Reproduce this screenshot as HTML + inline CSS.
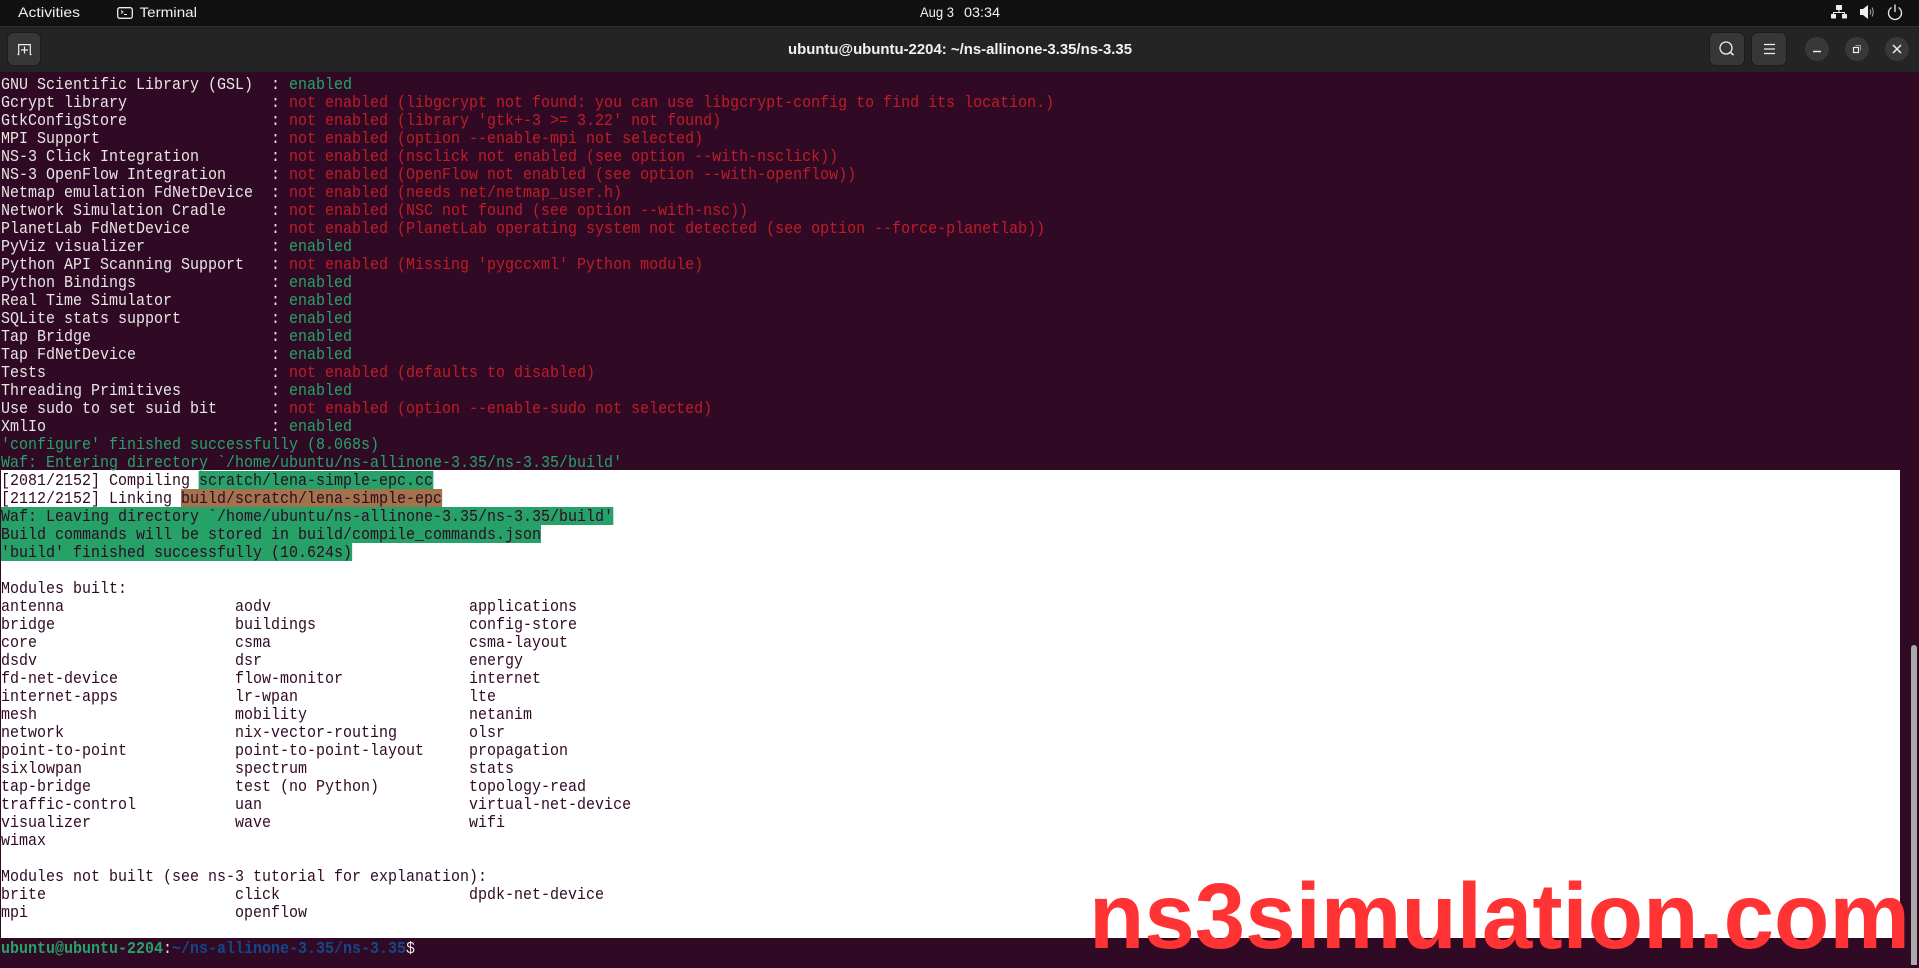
<!DOCTYPE html>
<html lang="en"><head><meta charset="utf-8"><title>Terminal</title>
<style>
html,body{margin:0;padding:0;width:1919px;height:968px;overflow:hidden;background:#300a24}
#term{position:absolute;left:0;top:72px;width:1919px;height:896px;background:#300a24}
#white{position:absolute;left:1px;top:470px;width:1899px;height:468px;background:#fff}
#scroll{position:absolute;left:1911px;top:645px;width:6px;height:320px;background:#aaa;border-radius:3px 3px 0 0}
#lines{position:absolute;left:1px;top:75px;width:2176px;transform-origin:0 0;transform:scaleX(.8823);
font:17px/22px "Liberation Mono",monospace;color:#e8e6e3;z-index:2}
#lines div{height:18px;white-space:pre}
.r{color:#c01c28}.g{color:#26a269}.b{color:#12488b}
.d{color:#300a24}
.hg,.hb{display:inline-block;height:18px;vertical-align:top;color:#300a24}
.hg{background:#26a269}
.hb{background:#a2734c}
svg{position:absolute;left:0;top:0}
</style></head><body>
<div id="term"></div>
<div id="white"></div>
<div id="scroll"></div>
<div id="lines"><div>GNU Scientific Library (GSL)  : <span class="g">enabled</span></div>
<div>Gcrypt library                : <span class="r">not enabled (libgcrypt not found: you can use libgcrypt-config to find its location.)</span></div>
<div>GtkConfigStore                : <span class="r">not enabled (library 'gtk+-3 &gt;= 3.22' not found)</span></div>
<div>MPI Support                   : <span class="r">not enabled (option --enable-mpi not selected)</span></div>
<div>NS-3 Click Integration        : <span class="r">not enabled (nsclick not enabled (see option --with-nsclick))</span></div>
<div>NS-3 OpenFlow Integration     : <span class="r">not enabled (OpenFlow not enabled (see option --with-openflow))</span></div>
<div>Netmap emulation FdNetDevice  : <span class="r">not enabled (needs net/netmap_user.h)</span></div>
<div>Network Simulation Cradle     : <span class="r">not enabled (NSC not found (see option --with-nsc))</span></div>
<div>PlanetLab FdNetDevice         : <span class="r">not enabled (PlanetLab operating system not detected (see option --force-planetlab))</span></div>
<div>PyViz visualizer              : <span class="g">enabled</span></div>
<div>Python API Scanning Support   : <span class="r">not enabled (Missing 'pygccxml' Python module)</span></div>
<div>Python Bindings               : <span class="g">enabled</span></div>
<div>Real Time Simulator           : <span class="g">enabled</span></div>
<div>SQLite stats support          : <span class="g">enabled</span></div>
<div>Tap Bridge                    : <span class="g">enabled</span></div>
<div>Tap FdNetDevice               : <span class="g">enabled</span></div>
<div>Tests                         : <span class="r">not enabled (defaults to disabled)</span></div>
<div>Threading Primitives          : <span class="g">enabled</span></div>
<div>Use sudo to set suid bit      : <span class="r">not enabled (option --enable-sudo not selected)</span></div>
<div>XmlIo                         : <span class="g">enabled</span></div>
<div class="g">'configure' finished successfully (8.068s)</div>
<div class="g">Waf: Entering directory `/home/ubuntu/ns-allinone-3.35/ns-3.35/build'</div>
<div class="d">[2081/2152] Compiling <span class="hg">scratch/lena-simple-epc.cc</span></div>
<div class="d">[2112/2152] Linking <span class="hb">build/scratch/lena-simple-epc</span></div>
<div class="d"><span class="hg">Waf: Leaving directory `/home/ubuntu/ns-allinone-3.35/ns-3.35/build'</span></div>
<div class="d"><span class="hg">Build commands will be stored in build/compile_commands.json</span></div>
<div class="d"><span class="hg">'build' finished successfully (10.624s)</span></div>
<div class="d"> </div>
<div class="d">Modules built:</div>
<div class="d">antenna                   aodv                      applications</div>
<div class="d">bridge                    buildings                 config-store</div>
<div class="d">core                      csma                      csma-layout</div>
<div class="d">dsdv                      dsr                       energy</div>
<div class="d">fd-net-device             flow-monitor              internet</div>
<div class="d">internet-apps             lr-wpan                   lte</div>
<div class="d">mesh                      mobility                  netanim</div>
<div class="d">network                   nix-vector-routing        olsr</div>
<div class="d">point-to-point            point-to-point-layout     propagation</div>
<div class="d">sixlowpan                 spectrum                  stats</div>
<div class="d">tap-bridge                test (no Python)          topology-read</div>
<div class="d">traffic-control           uan                       virtual-net-device</div>
<div class="d">visualizer                wave                      wifi</div>
<div class="d">wimax</div>
<div class="d"> </div>
<div class="d">Modules not built (see ns-3 tutorial for explanation):</div>
<div class="d">brite                     click                     dpdk-net-device</div>
<div class="d">mpi                       openflow</div>
<div class="d"> </div>
<div><b class="g" style="font-weight:bold">ubuntu@ubuntu-2204</b>:<b class="b">~/ns-allinone-3.35/ns-3.35</b>$</div></div>

<svg width="1919" height="968" viewBox="0 0 1919 968" style="z-index:3" font-family="Liberation Sans, sans-serif">
<rect x="0" y="0" width="1919" height="26" fill="#111111"/>
<rect x="0" y="26" width="1919" height="1" fill="#303030"/>
<rect x="0" y="27" width="1919" height="45" fill="#242424"/>
<text x="18" y="17" font-size="14" fill="#f0f0f0" textLength="62" lengthAdjust="spacingAndGlyphs">Activities</text>
<rect x="117.7" y="7.7" width="14.6" height="10.6" rx="2" fill="none" stroke="#eee" stroke-width="1.3"/>
<path d="M121 10.5l2 1.5-2 1.5M124 14.5h3" fill="none" stroke="#eee" stroke-width="1"/>
<text x="139.5" y="17" font-size="14" fill="#f0f0f0" textLength="57.5" lengthAdjust="spacingAndGlyphs">Terminal</text>
<text x="920" y="17" font-size="14" fill="#f0f0f0" textLength="34" lengthAdjust="spacingAndGlyphs">Aug 3</text>
<text x="964" y="17" font-size="14" fill="#f0f0f0" textLength="36" lengthAdjust="spacingAndGlyphs">03:34</text>
<text x="788" y="54" font-size="14.5" font-weight="bold" fill="#f2f2f2" textLength="344" lengthAdjust="spacingAndGlyphs">ubuntu@ubuntu-2204: ~/ns-allinone-3.35/ns-3.35</text>

<!-- new tab -->
<rect x="7.5" y="32.5" width="33" height="33" rx="6" fill="#373737" stroke="#1c1c1c"/>
<path d="M17.5 54.5h1.2V44.6h11.6v9.9h1.2" fill="none" stroke="#eee" stroke-width="1.2"/>
<path d="M21 50h7M24.5 46.5v7" stroke="#eee" stroke-width="1.2"/>

<!-- tray -->
<g fill="#eee">
<rect x="1836" y="5" width="6" height="5" rx=".6"/>
<rect x="1831" y="14" width="5" height="4.5" rx=".6"/>
<rect x="1842" y="14" width="5" height="4.5" rx=".6"/>
<path d="M1838.5 10h1v2h5.5v2h-1v-1h-10v1h-1v-2h5.500z"/>
<path d="M1860 9h3l5-4v14l-5-4h-3z"/>
</g>
<path d="M1870 9.500q1.500 2.500 0 5M1872 7.500q2.500 4.500 0 9" fill="none" stroke="#aaa" stroke-width="1"/>
<path d="M1891.500 7.500a6.500 6.500 0 1 0 7 0M1895 4.500v7.500" fill="none" stroke="#eee" stroke-width="1.300"/>

<!-- header buttons -->
<rect x="1709.500" y="32.500" width="35" height="33" rx="6" fill="#373737" stroke="#1c1c1c"/>
<circle cx="1726" cy="48" r="6" fill="none" stroke="#eee" stroke-width="1.300"/>
<path d="M1730.500 52.500l3 2.500" stroke="#eee" stroke-width="1.500"/>
<rect x="1751.500" y="32.500" width="35" height="33" rx="6" fill="#373737" stroke="#1c1c1c"/>
<path d="M1764 44.500h11M1764 49h11M1764 53.500h11" stroke="#eee" stroke-width="1.200"/>
<circle cx="1817" cy="49" r="12" fill="#383838"/>
<path d="M1813 51.500h8" stroke="#eee" stroke-width="1.400"/>
<circle cx="1857" cy="49" r="12" fill="#383838"/>
<rect x="1853.500" y="47.500" width="5" height="5" fill="none" stroke="#eee" stroke-width="1.200"/>
<path d="M1855.500 45.500h5v5" fill="none" stroke="#999" stroke-width="1"/>
<circle cx="1897" cy="49" r="12" fill="#383838"/>
<path d="M1893 45l8 8M1901 45l-8 8" stroke="#eee" stroke-width="1.500"/>

<!-- watermark -->
<text x="1089" y="948" font-size="93" font-weight="bold" fill="#ff3333" textLength="821" lengthAdjust="spacingAndGlyphs">ns3simulation.com</text>
</svg>
</body></html>
